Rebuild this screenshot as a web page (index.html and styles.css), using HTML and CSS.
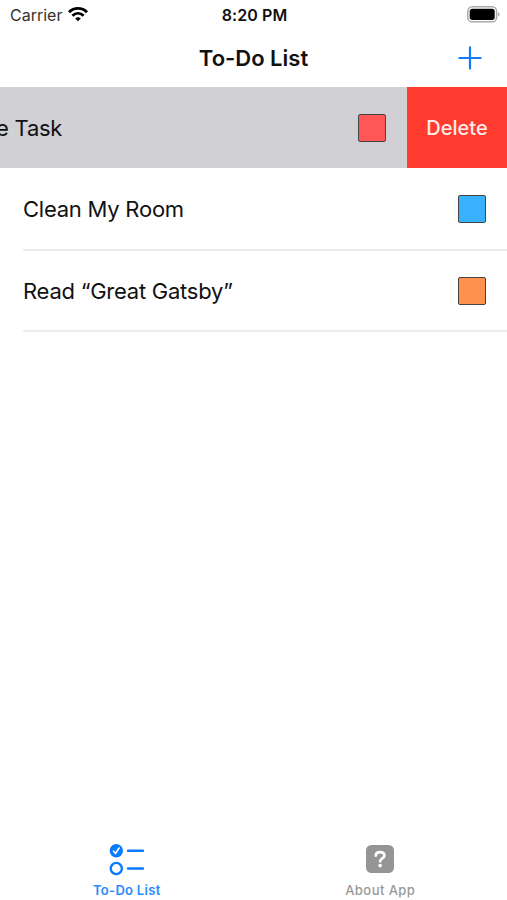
FILE: index.html
```html
<!DOCTYPE html>
<html lang="en">
<head>
<meta charset="utf-8">
<title>To-Do List</title>
<link rel="stylesheet" href="styles.css">
</head>
<body>
<div class="app">
  <div class="status">
    <div class="status-left">
      <span class="carrier">Carrier</span>
      <svg class="wifi" width="20" height="15" viewBox="0 0 20 15" fill="none" stroke="#000" stroke-width="2.8">
        <path d="M1 5.2C6 .2 14 .2 19 5.2"/>
        <path d="M4.4 8.7C7.7 5.5 12.3 5.5 15.6 8.7"/>
        <path d="M10 14.2 7.2 11.4C8.8 10 11.2 10 12.8 11.4Z" fill="#000" stroke="none"/>
      </svg>
    </div>
    <span class="time">8:20 PM</span>
    <svg class="battery" width="33" height="17" viewBox="0 0 33 17">
      <rect x=".8" y=".8" width="28.8" height="15" rx="4.4" fill="#fff" stroke="#aaa" stroke-width="1.5"/>
      <rect x="2.7" y="2.7" width="25" height="11.2" rx="2.6" fill="#000"/>
      <path d="M31 6v4.6c2-.8 2-3.8 0-4.6Z" fill="#aaa"/>
    </svg>
  </div>
  <header class="navbar">
    <h1 class="title">To-Do List</h1>
    <svg class="add" width="24" height="24" viewBox="0 0 24 24" stroke="#117aff" stroke-width="2.2" stroke-linecap="round"><path d="M12 1.4v21.2M1.4 12h21.2"/></svg>
  </header>
  <main class="list">
    <div class="row swiped">
      <div class="cell">
        <span class="label">e Task</span>
        <span class="swatch red"></span>
      </div>
      <div class="delete"><span>Delete</span></div>
    </div>
    <div class="row">
      <span class="label">Clean My Room</span>
      <span class="swatch blue"></span>
    </div>
    <div class="row">
      <span class="label">Read “Great Gatsby”</span>
      <span class="swatch orange"></span>
    </div>
  </main>
  <nav class="tabs">
    <div class="tab active">
      <svg width="36" height="34" viewBox="0 0 36 34" fill="none" stroke="#0a7aff" stroke-width="2.4" stroke-linecap="round">
        <circle cx="7.3" cy="7.7" r="6.7" fill="#0a7aff" stroke="none"/>
        <path d="M4.5 8.2 6.5 10.4 10.1 5" stroke="#fff" stroke-width="1.6"/>
        <circle cx="7.3" cy="25.5" r="5.6"/>
        <path d="M19 7.7h15M19 25.5h15"/>
      </svg>
      <span>To-Do List</span>
    </div>
    <div class="tab">
      <svg width="28" height="34" viewBox="0 0 28 34" fill="none">
        <rect x="0" y="2" width="28" height="28" rx="5.5" fill="#959595"/>
        <path d="M9.8 12.6C9.9 10.3 11.6 9.2 14 9.2C16.6 9.2 18.4 10.5 18.4 12.6C18.4 15.4 14.1 15.4 14.1 18.3" stroke="#fff" stroke-width="2.7" stroke-linecap="round"/>
        <circle cx="14.1" cy="22.6" r="1.8" fill="#fff"/>
      </svg>
      <span>About App</span>
    </div>
  </nav>
</div>
</body>
</html>
```

FILE: styles.css
```css
* { box-sizing: border-box; }
body {
  margin: 0;
  background: #fff;
  color: #111;
  font-family: Inter, "Liberation Sans", sans-serif;
}
svg { display: block; }
.app {
  display: flex;
  flex-direction: column;
  height: 900px;
  overflow: hidden;
}
.status {
  display: grid;
  grid-template-columns: 1fr auto 1fr;
  align-items: center;
  height: 30px;
  padding: 0 8px 0 10px;
  font-size: 16px;
}
.status-left { display: flex; align-items: center; gap: 6px; }
.carrier { color: #333; letter-spacing: 0; }
.wifi { margin-top: -1px; }
.time { font-weight: 600; font-size: 16px; letter-spacing: 0.1px; }
.battery { justify-self: end; margin: -2px -1px 0 0; }
.navbar {
  display: grid;
  grid-template-columns: 1fr auto 1fr;
  align-items: center;
  height: 57px;
  padding: 0 25px 2px;
}
.title {
  grid-column: 2;
  margin: 0;
  font-size: 22px;
  font-weight: 600;
  letter-spacing: 0;
}
.add { justify-self: end; }
.list { flex: 1; }
.row {
  display: flex;
  align-items: center;
  justify-content: space-between;
  height: 82px;
  margin-left: 23px;
  padding-right: 21px;
  border-bottom: 2px solid #ebebec;
}
.row.swiped {
  align-items: stretch;
  height: 81px;
  margin: 0 0 1px;
  padding: 0;
  border: 0;
}
.row:last-child { height: 81px; padding-top: 1px; }
.cell {
  flex: 1;
  display: flex;
  align-items: center;
  justify-content: space-between;
  padding-right: 21px;
  background: #d1d0d5;
}
.cell .label { margin-left: -4px; }
.label { font-size: 22px; letter-spacing: -0.24px; white-space: nowrap; }
.swatch {
  width: 28px;
  height: 28px;
  border: 1px solid #444;
  border-radius: 2px;
}
.red { background: #ff5658; }
.blue { background: #38b2ff; }
.orange { background: #ff924d; }
.delete {
  display: flex;
  align-items: center;
  justify-content: center;
  width: 100px;
  background: #ff3b30;
  color: #ffeceb;
  font-size: 20px;
  font-weight: 500;
}
.tabs { display: grid; grid-template-columns: 1fr 1fr; height: 57px; }
.tab {
  display: flex;
  flex-direction: column;
  align-items: center;
  font-size: 13px;
  font-weight: 500;
  line-height: 16px;
  letter-spacing: 0.45px;
  color: #999;
}
.tab span { margin-top: 5px; }
.tab.active { color: #2b8aff; font-weight: 600; letter-spacing: 0.3px; }
```
